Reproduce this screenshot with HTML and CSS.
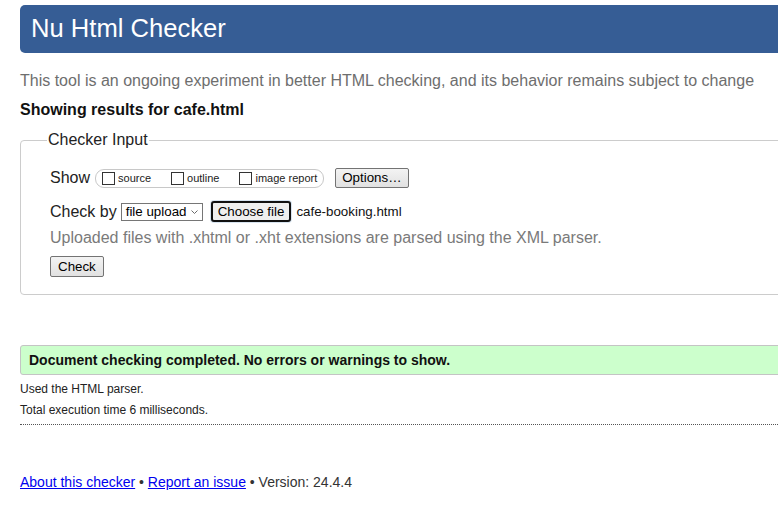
FILE: index.html
```html
<!DOCTYPE html>
<html lang="en">
<head>
<meta charset="utf-8">
<title>Nu Html Checker</title>
<link rel="stylesheet" href="styles.css">
</head>
<body>
<div class="page">
  <h1 class="masthead">Nu Html Checker</h1>
  <p class="intro">This tool is an ongoing experiment in better HTML checking, and its behavior remains subject to change</p>
  <p class="results-for">Showing results for cafe.html</p>
  <form class="checker-form">
    <fieldset class="checker">
      <legend>Checker Input</legend>
      <div class="row row-show">
        <span class="row-label">Show</span>
        <span class="pill">
          <label class="opt"><input type="checkbox" class="cb">source</label>
          <label class="opt"><input type="checkbox" class="cb">outline</label>
          <label class="opt opt-last"><input type="checkbox" class="cb">image report</label>
        </span>
        <button type="button" class="btn btn-options">Options…</button>
      </div>
      <div class="row row-checkby">
        <span class="row-label label-checkby">Check by</span>
        <span class="select">file upload<svg class="chev" width="7" height="4" viewBox="0 0 7 4"><path d="M0.5 0.5 L3.5 3.5 L6.5 0.5" fill="none" stroke="#6b6b6b" stroke-width="1"/></svg></span>
        <button type="button" class="btn btn-file">Choose file</button>
        <span class="filename">cafe-booking.html</span>
      </div>
      <p class="hint">Uploaded files with .xhtml or .xht extensions are parsed using the XML parser.</p>
      <div class="row row-submit">
        <button type="button" class="btn btn-check">Check</button>
      </div>
    </fieldset>
  </form>
  <div class="success">Document checking completed. No errors or warnings to show.</div>
  <div class="meta">
    <p>Used the HTML parser.</p>
    <p>Total execution time 6 milliseconds.</p>
  </div>
  <footer class="footer">
    <a href="#">About this checker</a> • <a href="#">Report an issue</a> • Version: 24.4.4
  </footer>
</div>
</body>
</html>
```

FILE: styles.css
```css
html, body {
  margin: 0;
  padding: 0;
  background: #fff;
  overflow: hidden;
}
body {
  font-family: "Liberation Sans", Arial, sans-serif;
  color: #222;
}
.page {
  width: 800px;
  padding: 5px 0 0 20px;
}
.masthead {
  margin: 0;
  background: #365d95;
  color: #fff;
  font-size: 25.6px;
  font-weight: normal;
  line-height: 30px;
  padding: 8px 11px 9.5px;
  border-radius: 5px 0 0 5px;
}
.intro {
  margin: 18px 0 0;
  font-size: 16px;
  line-height: 20px;
  color: #6e6e6e;
}
.results-for {
  margin: 9px 0 0;
  font-size: 16px;
  line-height: 20px;
  font-weight: bold;
  color: #111;
}
.checker-form {
  margin: 10.5px 0 0;
}
.checker {
  margin: 0;
  min-width: 0;
  border: 1px solid #cccccc;
  border-radius: 4px;
  padding: 18px 0 17px 29px;
}
.checker legend {
  font-size: 16px;
  line-height: 20px;
  padding: 0 1px;
  margin-left: -3px;
  color: #222;
}
.row {
  display: flex;
  align-items: center;
}
.row-label {
  font-size: 16px;
  line-height: 20px;
  color: #222;
}
.row-show {
  height: 20px;
}
.row-show .row-label {
  margin-right: 5px;
}
.pill {
  display: flex;
  align-items: center;
  height: 19px;
  box-sizing: border-box;
  border: 1px solid #c8c8c8;
  border-radius: 9px;
  padding: 0 6px 0 2px;
}
.opt {
  display: flex;
  align-items: center;
  font-size: 11px;
  line-height: 13px;
  color: #222;
  margin-right: 16px;
}
.opt-last {
  margin-right: 0;
}
.cb {
  -webkit-appearance: none;
  appearance: none;
  width: 13px;
  height: 13px;
  margin: 0 3px 0 4px;
  border: 1px solid #333;
  background: #fff;
  border-radius: 0;
}
.btn {
  font-family: "Liberation Sans", Arial, sans-serif;
  font-size: 13.33px;
  color: #000;
  background: linear-gradient(#f3f3f3, #e1e1e1);
  border: 1px solid #737373;
  border-radius: 2px;
  height: 20px;
  padding: 0 7px;
  line-height: 16px;
}
.btn-options {
  margin-left: 11px;
  padding: 0 6px;
}
.row-checkby {
  height: 21px;
  margin-top: 13px;
}
.label-checkby {
  margin-right: 4px;
}
.select {
  display: flex;
  align-items: center;
  justify-content: space-between;
  box-sizing: border-box;
  width: 82px;
  height: 18px;
  border: 1px solid #767676;
  padding: 0 4px 0 4px;
  font-size: 13.33px;
  color: #000;
  background: #fff;
}
.chev {
  display: block;
}
.btn-file {
  margin-left: 8px;
  height: 21px;
  padding: 0 5px;
  border: 2px solid #111;
  border-radius: 3px;
  background: #efefef;
  box-shadow: 0 0 0 1px #d8e4f0;
}
.filename {
  margin-left: 5px;
  font-size: 13.33px;
  color: #111;
}
.hint {
  margin: 6px 0 0;
  font-size: 16px;
  line-height: 20px;
  color: #7a7a7a;
}
.row-submit {
  margin-top: 8px;
}
.btn-check {
  height: 21px;
  padding: 0 7px;
}
.success {
  margin-top: 50px;
  background: #ccffcc;
  border: 1px solid #c4c4c4;
  border-radius: 3px;
  padding: 6px 8px 5px;
  font-size: 14px;
  line-height: 17px;
  font-weight: bold;
  color: #111;
}
.meta {
  padding: 1px 0 6px;
  border-bottom: 1px dotted #555;
}
.meta p {
  margin: 6px 0 0;
  font-size: 12px;
  line-height: 15px;
  color: #222;
}
.footer {
  margin-top: 49px;
  font-size: 14px;
  line-height: 17px;
  color: #333;
}
.footer a {
  color: #0000ee;
  text-decoration: underline;
}
```
